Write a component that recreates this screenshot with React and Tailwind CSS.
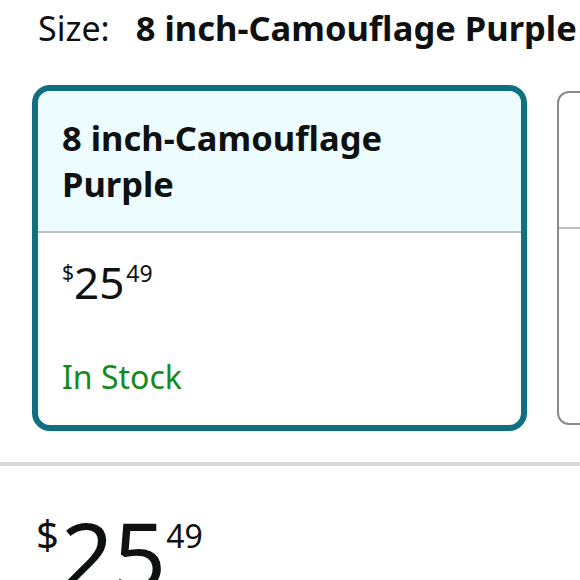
export default function App() {
  const font = { fontFamily: '"Noto Sans", "Open Sans", sans-serif' };
  return (
    <div className="w-[580px] h-[580px] overflow-hidden bg-white text-[#0f1111]" style={font}>
      <div className="h-[85px] pl-[38px] pt-[5px] flex items-start whitespace-nowrap">
        <span className="text-[34px] leading-[46px] font-normal">Size:</span>
        <span className="ml-[26px] text-[34.5px] leading-[46px] font-bold">8 inch-Camouflage Purple</span>
      </div>
      <div className="flex items-center gap-[30px] pl-[32px]">
        <div className="shrink-0 w-[495px] h-[346px] rounded-[18px] border-[6px] border-[#11707f] overflow-hidden flex flex-col">
          <div className="h-[142px] shrink-0 bg-[#edfdff] border-b-2 border-[#bbbfbf] px-[24px] pt-[24px]">
            <div className="text-[34.5px] leading-[46px] font-bold">8 inch-Camouflage<br />Purple</div>
          </div>
          <div className="px-[24px] pt-[24px] flex flex-col">
            <div className="flex items-start leading-none">
              <span className="text-[21px] mt-[5px]">$</span>
              <span className="text-[44px] leading-[50px]">25</span>
              <span className="text-[23px] mt-[5px] ml-[2px]">49</span>
            </div>
            <div className="mt-[49px] text-[32px] leading-[42px] text-[#138a1e]">In Stock</div>
          </div>
        </div>
        <div className="shrink-0 w-[60px] h-[334px] rounded-[12px] border-2 border-[#888c8c] overflow-hidden flex flex-col">
          <div className="h-[136px] shrink-0 border-b-2 border-[#bbbfbf]"></div>
        </div>
      </div>
      <div className="mt-[31px] h-[4px] bg-[#d5d9d9]"></div>
      <div className="pl-[36px] pt-[42px] flex items-start leading-none">
        <span className="text-[40px] mt-[6px]">$</span>
        <span className="text-[92px] leading-[92px] ml-[2px]">25</span>
        <span className="text-[32px] mt-[12px]">49</span>
      </div>
    </div>
  );
}
